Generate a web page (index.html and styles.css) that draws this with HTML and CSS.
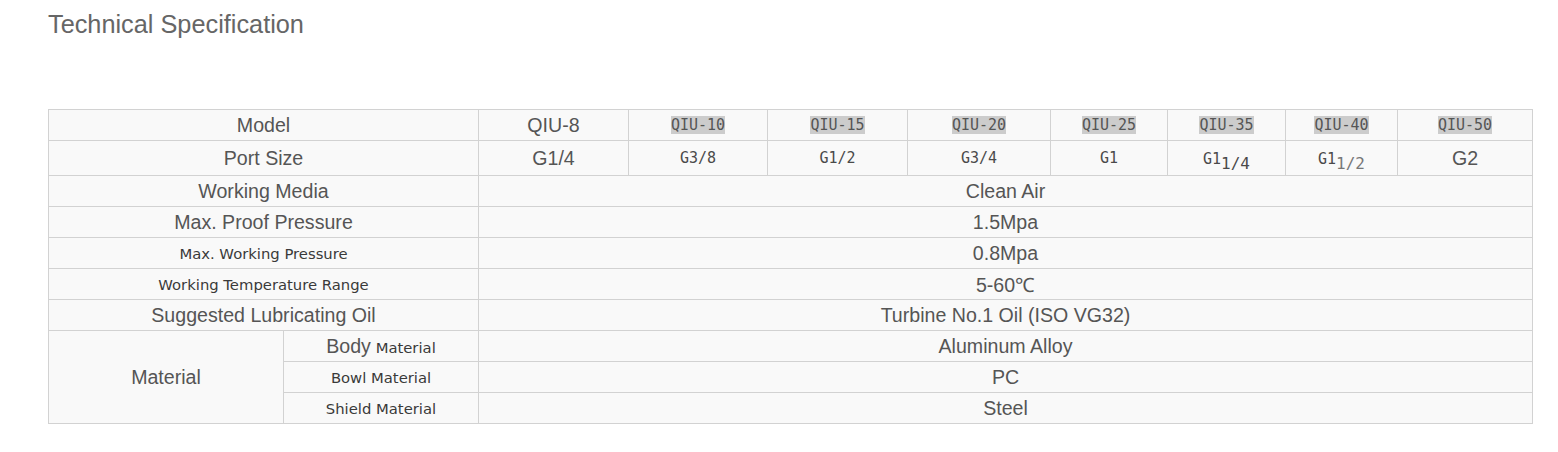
FILE: index.html
```html
<!DOCTYPE html>
<html>
<head>
<meta charset="utf-8">
<link rel="stylesheet" href="styles.css">
</head>
<body>
<div class="page">
  <h1 class="title">Technical Specification</h1>
  <table class="spec">
    <colgroup>
      <col class="c-a"><col class="c-b"><col class="c-1"><col class="c-2"><col class="c-3"><col class="c-4"><col class="c-5"><col class="c-6"><col class="c-7"><col class="c-8">
    </colgroup>
    <tr class="r-model">
      <td colspan="2" class="lbl">Model</td>
      <td class="lbl">QIU-8</td>
      <td class="mono"><span class="hl">QIU-10</span></td>
      <td class="mono"><span class="hl">QIU-15</span></td>
      <td class="mono"><span class="hl">QIU-20</span></td>
      <td class="mono"><span class="hl">QIU-25</span></td>
      <td class="mono"><span class="hl">QIU-35</span></td>
      <td class="mono"><span class="hl">QIU-40</span></td>
      <td class="mono"><span class="hl">QIU-50</span></td>
    </tr>
    <tr class="r-port">
      <td colspan="2" class="lbl">Port Size</td>
      <td class="lbl">G1/4</td>
      <td class="mono">G3/8</td>
      <td class="mono">G1/2</td>
      <td class="mono">G3/4</td>
      <td class="mono">G1</td>
      <td class="mono">G1<span class="sub dark">1/4</span></td>
      <td class="mono">G1<span class="sub">1/2</span></td>
      <td class="lbl">G2</td>
    </tr>
    <tr><td colspan="2" class="lbl">Working Media</td><td colspan="8" class="lbl">Clean Air</td></tr>
    <tr><td colspan="2" class="lbl">Max. Proof Pressure</td><td colspan="8" class="lbl">1.5Mpa</td></tr>
    <tr><td colspan="2" class="small">Max. Working Pressure</td><td colspan="8" class="lbl">0.8Mpa</td></tr>
    <tr><td colspan="2" class="small">Working Temperature Range</td><td colspan="8" class="lbl">5-60℃</td></tr>
    <tr><td colspan="2" class="lbl">Suggested Lubricating Oil</td><td colspan="8" class="lbl">Turbine No.1 Oil (ISO VG32)</td></tr>
    <tr>
      <td rowspan="3" class="lbl">Material</td>
      <td class="small"><span class="big">Body</span> Material</td>
      <td colspan="8" class="lbl">Aluminum Alloy</td>
    </tr>
    <tr><td class="small">Bowl Material</td><td colspan="8" class="lbl">PC</td></tr>
    <tr><td class="small">Shield Material</td><td colspan="8" class="lbl">Steel</td></tr>
  </table>
</div>
</body>
</html>
```
FILE: styles.css
```css
html, body {
  margin: 0;
  padding: 0;
  background: #ffffff;
}
.page {
  padding: 10px 0 0 48px;
}
.title {
  margin: 0;
  font-family: "Liberation Sans", Arial, sans-serif;
  font-weight: normal;
  font-size: 25.3px;
  line-height: 29px;
  color: #666666;
}
.spec {
  margin-top: 70px;
  border-collapse: collapse;
  table-layout: fixed;
  width: 1485px;
  background: #f9f9f9;
}
.c-a { width: 235px; }
.c-b { width: 195px; }
.c-1 { width: 150px; }
.c-2 { width: 139px; }
.c-3 { width: 140px; }
.c-4 { width: 143px; }
.c-5 { width: 117px; }
.c-6 { width: 118px; }
.c-7 { width: 112px; }
.c-8 { width: 135px; }
.spec td {
  border: 1px solid #d2d2d2;
  height: 30px;
  padding: 0;
  text-align: center;
  vertical-align: middle;
  white-space: nowrap;
}
.spec .r-port td {
  height: 34px;
}
.lbl {
  font-family: "Liberation Sans", Arial, sans-serif;
  font-size: 19.6px;
  color: #555555;
}
.mono {
  font-family: "DejaVu Sans Mono", "Liberation Mono", monospace;
  font-size: 15px;
  color: #4a4a4a;
}
.hl {
  background: #cccccc;
  color: #555555;
}
.sub {
  font-size: 16px;
  position: relative;
  top: 5px;
  color: #777777;
}
.sub.dark {
  color: #4a4a4a;
}
.small {
  font-family: "DejaVu Sans", Verdana, sans-serif;
  font-size: 14.8px;
  color: #3a3a3a;
}
.big {
  font-family: "Liberation Sans", Arial, sans-serif;
  font-size: 19.6px;
  color: #555555;
}
```
